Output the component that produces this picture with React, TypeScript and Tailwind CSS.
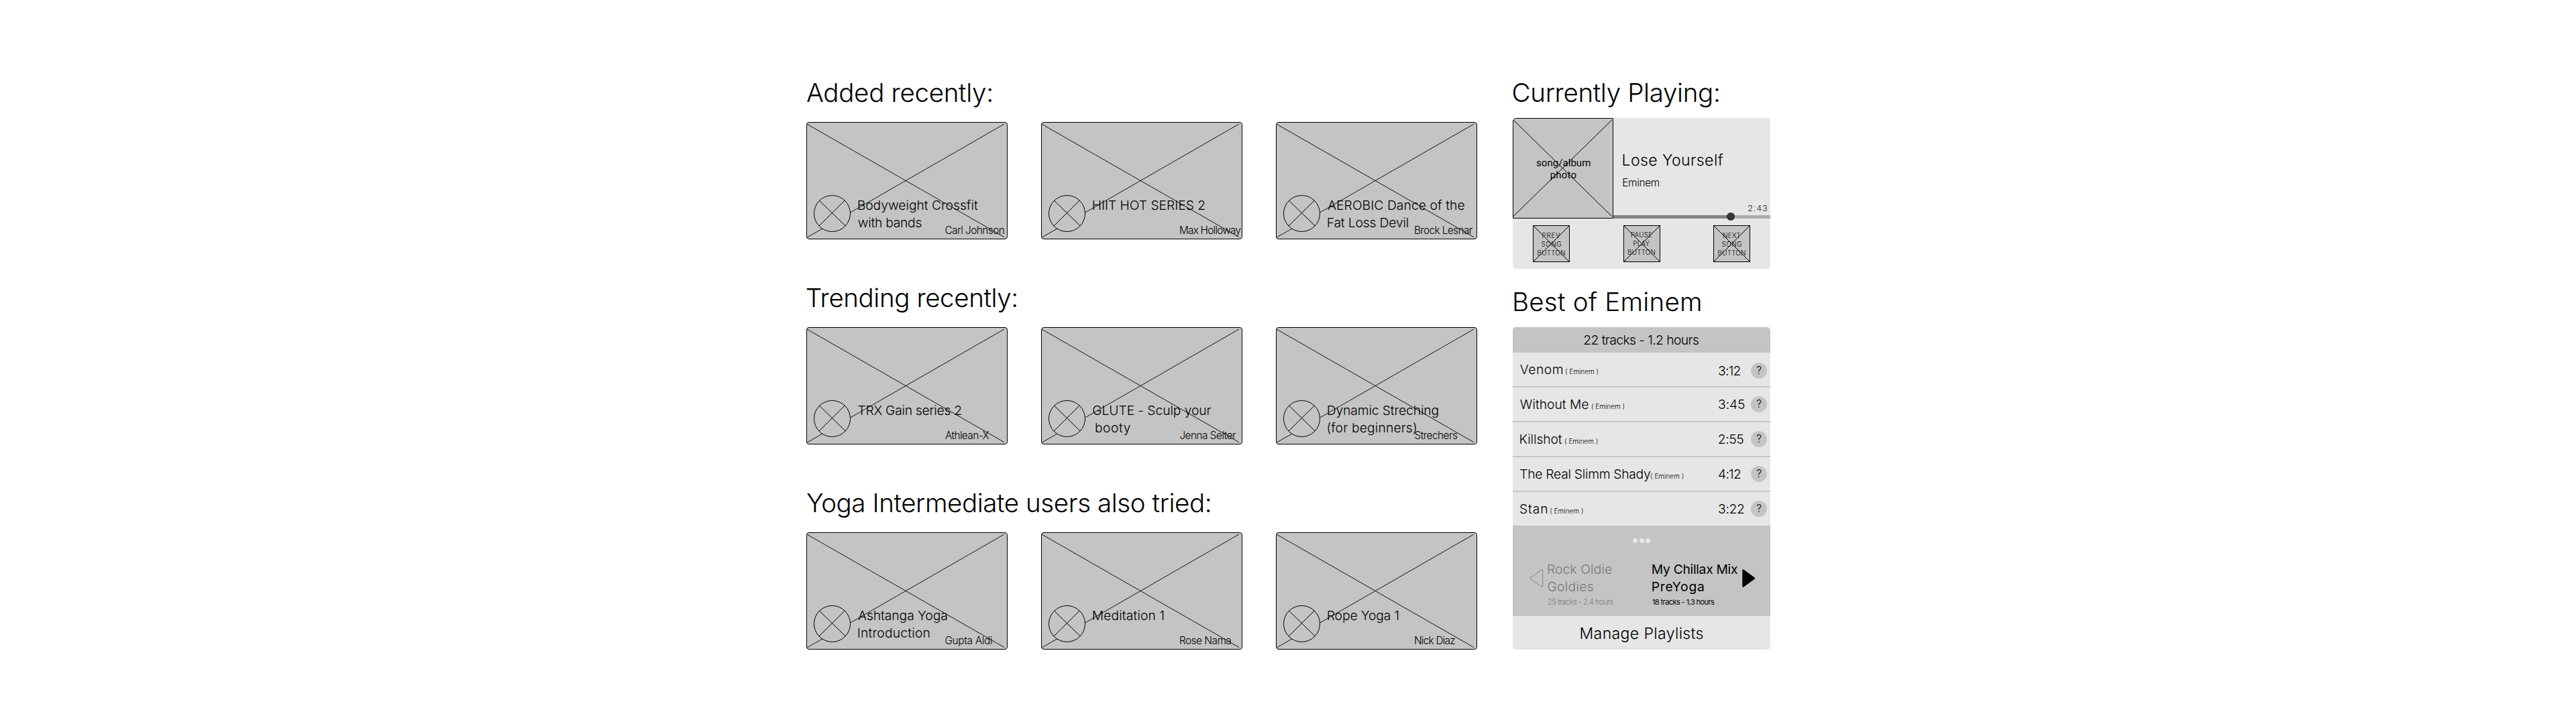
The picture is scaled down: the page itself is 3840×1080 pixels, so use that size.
import { useLayoutEffect, useRef, useState } from 'react';

type TextProps = { children: string; w: number; className: string };

/** One line of text whose letter spacing is tuned so that its ink spans `w` pixels. */
function Line({ children, w, className }: TextProps) {
  const ref = useRef<HTMLDivElement>(null);
  const [fit, setFit] = useState({ letterSpacing: 0, textIndent: 0 });
  useLayoutEffect(() => {
    const el = ref.current;
    const ctx = document.createElement('canvas').getContext('2d');
    if (!el || !ctx) return;
    const cs = getComputedStyle(el);
    // Measure at ten times the size, since ink bounds come back in whole pixels.
    ctx.font = `${cs.fontWeight} ${parseFloat(cs.fontSize) * 10}px ${cs.fontFamily}`;
    const m = ctx.measureText(children);
    const ink = (m.actualBoundingBoxLeft + m.actualBoundingBoxRight) / 10;
    setFit({
      letterSpacing: children.length > 1 ? (w - ink) / (children.length - 1) : 0,
      textIndent: m.actualBoundingBoxLeft / 10,
    });
  }, [children, w]);
  return (
    <div ref={ref} style={{ ...fit, width: w }} className={`whitespace-pre ${className}`}>
      {children}
    </div>
  );
}

type Entry = [text: string, width: number];
type Card = { title: Entry[]; author: Entry; indent?: boolean };
type Section = { heading: Entry; cards: Card[] };

const sections: Section[] = [
  {
    heading: ['Added recently:', 275.5],
    cards: [
      { title: [['Bodyweight Crossfit', 178], ['with bands', 94]], author: ['Carl Johnson', 87.3] },
      { title: [['HIIT HOT SERIES 2', 166.3]], author: ['Max Holloway', 90.3] },
      { title: [['AEROBIC Dance of the', 203.3], ['Fat Loss Devil', 119.3]], author: ['Brock Lesnar', 85.7] },
    ],
  },
  {
    heading: ['Trending recently:', 312.5],
    cards: [
      { title: [['TRX Gain series 2', 153.3]], author: ['Athlean-X', 65] },
      { title: [['GLUTE - Sculp your', 175.7], ['booty', 51.3]], author: ['Jenna Selter', 83], indent: true },
      { title: [['Dynamic Streching', 164.3], ['(for beginners)', 131.3]], author: ['Strechers', 63] },
    ],
  },
  {
    heading: ['Yoga Intermediate users also tried:', 601],
    cards: [
      { title: [['Ashtanga Yoga', 131.8], ['Introduction', 106]], author: ['Gupta Aldi', 69.4] },
      { title: [['Meditation 1', 105]], author: ['Rose Nama', 75.3] },
      { title: [['Rope Yoga 1', 105]], author: ['Nick Diaz', 59.3] },
    ],
  },
];

function VideoCard({ title, author, indent }: Card) {
  return (
    <article className="relative h-[175px] w-[300px] rounded-[4px] border border-black bg-[#c4c4c4]">
      <svg className="absolute -left-px -top-px" width="300" height="175" fill="none" stroke="#000">
        <path d="M1.3 3.3 295 171.7M295 3 1.3 172" strokeWidth="0.9" />
        <circle cx="38.5" cy="136.5" r="27" fill="#c4c4c4" />
        <path d="M19.3 117 58.3 155M57.3 117 19 155" />
      </svg>
      <div className="relative ml-[76.5px] mt-[110px]">
        {title.map(([t, w], i) => (
          <div key={t} className={indent && i === 1 ? 'pl-[4px]' : ''}>
            <Line w={w} className="text-[19.3px] leading-[26px]">{t}</Line>
          </div>
        ))}
      </div>
      <div className="absolute left-[206.3px] top-[150px]">
        <Line w={author[1]} className="text-[15.4px] leading-[21px]">{author[0]}</Line>
      </div>
    </article>
  );
}

type ControlProps = { lines: Entry[]; className?: string };

function ControlButton({ lines, className = '' }: ControlProps) {
  return (
    <button className="relative flex h-[55px] w-[55px] flex-col items-center border border-black bg-[#c4c4c4]">
      <svg className="absolute -left-px -top-px" width="55" height="55" stroke="#000">
        <path d="M1 1 54 54M54 1 1 54" />
      </svg>
      <div className={`flex flex-col items-center ${className}`}>
        {lines.map(([t, w]) => (
          <Line key={t} w={w} className="text-left text-[9.8px] leading-[13px]">{t}</Line>
        ))}
      </div>
    </button>
  );
}

function Player() {
  return (
    <section className="h-[225px] w-[384px] overflow-hidden rounded-[5px] bg-[#e6e6e6]">
      <div className="flex h-[150px]">
        <div className="relative h-[150px] w-[150px] rounded-tl-[5px] border border-black bg-[#c4c4c4]">
          <svg className="absolute -left-px -top-px" width="150" height="150" stroke="#000">
            <path d="M1 3 147.7 146.7M147.7 3 1 146.7" />
          </svg>
          <div className="mt-[57px] flex flex-col items-center pl-[1px] font-['Roboto',sans-serif] font-normal">
            <Line w={79.7} className="text-[15px] leading-[18px]">song/album</Line>
            <Line w={37.7} className="text-[15px] leading-[18px]">photo</Line>
          </div>
        </div>
        <div className="flex w-[234px] flex-col">
          <div className="pl-[14.7px] pt-[47px]">
            <Line w={148.7} className="text-[23.1px] leading-[32px]">Lose Yourself</Line>
            <Line w={53.3} className="mt-[7px] text-[15.4px] leading-[21px]">Eminem</Line>
          </div>
          <div className="mt-auto flex justify-end pr-[5.3px]">
            <Line w={27.7} className="font-['Roboto',sans-serif] text-[12.5px] leading-[14px]">2:43</Line>
          </div>
          <div className="relative mt-[3px] flex h-[5px] bg-[#adadad]">
            <div className="w-[175px] bg-[#828282]" />
            <div className="absolute left-[169px] top-[-4px] h-[12px] w-[12px] rounded-full bg-[#333]" />
          </div>
        </div>
      </div>
      <div className="flex justify-between pl-[30px] pr-[30px] pt-[10px]">
        <ControlButton lines={[['PREV', 26], ['SONG', 28.7], ['BUTTON', 40]]} className="mt-[8px]" />
        <ControlButton lines={[['PAUSE', 30.7], ['PLAY', 23.7], ['BUTTON', 40]]} className="mt-[7px]" />
        <ControlButton lines={[['NEXT', 25.3], ['SONG', 28.7], ['BUTTON', 40]]} className="mt-[8px]" />
      </div>
    </section>
  );
}

const tracks: { name: Entry; gap: number; time: Entry; first?: boolean }[] = [
  { name: ['Venom', 62.7], gap: 5, time: ['3:12', 31.7], first: true },
  { name: ['Without Me', 101.3], gap: 5.3, time: ['3:45', 38] },
  { name: ['Killshot', 62], gap: 4.8, time: ['2:55', 36.3] },
  { name: ['The Real Slimm Shady', 194], gap: 0.8, time: ['4:12', 32] },
  { name: ['Stan', 39.7], gap: 5.3, time: ['3:22', 37] },
];

function Playlist() {
  return (
    <section className="w-[384px] overflow-hidden rounded-[5px] bg-[#e6e6e6]">
      <div className="flex h-[38px] justify-center bg-[#c4c4c4] pt-[6px]">
        <Line w={170.3} className="text-[19.3px] leading-[26px]">22 tracks - 1.2 hours</Line>
      </div>
      <div className="divide-y-2 divide-[#c4c4c4]">
        {tracks.map(({ name, gap, time, first }) => (
          <div key={name[0]} className="box-content flex h-[50px] pl-[11.3px]">
            <div className="flex w-[296px] items-baseline pt-[12px]">
              <Line w={name[1]} className="text-[19.3px] leading-[26px]">{name[0]}</Line>
              <div style={{ paddingLeft: gap }}>
                <Line w={48} className="text-[10px] leading-[13px]">( Eminem )</Line>
              </div>
            </div>
            <div className={`w-[47.7px] ${first ? 'pt-[14px]' : 'pt-[12px]'}`}>
              <Line w={time[1]} className="text-[19.3px] leading-[26px]">{time[0]}</Line>
            </div>
            <div
              className={`flex h-[24px] w-[24px] justify-center rounded-full bg-[#c4c4c4] text-[15.4px] leading-[23px] ${first ? 'mt-[15px]' : 'mt-[13px]'}`}
            >
              ?
            </div>
          </div>
        ))}
      </div>
      <div className="h-[135px] bg-[#c4c4c4] pt-[18.5px]">
        <div className="flex justify-center gap-[2.7px]">
          <span className="h-[7px] w-[7px] rounded-full bg-[#e6e6e6]" />
          <span className="h-[7px] w-[7px] rounded-full bg-[#e6e6e6]" />
          <span className="h-[7px] w-[7px] rounded-full bg-[#e6e6e6]" />
        </div>
        <div className="flex pl-[26px] pt-[26.5px]">
          <svg className="mt-[13px] shrink-0" width="20" height="28" fill="none" stroke="#828282">
            <path d="M17.2 .8 1 12.4Q-.3 13.5 1 14.8L17.2 26.4Q18.7 27.2 18.7 25.6V1.8Q18.7 .2 17.2 .8Z" />
          </svg>
          <div className="ml-[6.7px] w-[155.7px] text-[#787878]">
            <Line w={94.7} className="text-[19.3px] leading-[26px]">Rock Oldie</Line>
            <Line w={67} className="text-[19.3px] leading-[26px]">Goldies</Line>
            <Line w={97} className="mt-[2px] text-[11px] leading-[16px]">25 tracks - 2.4 hours</Line>
          </div>
          <div className="w-[133.3px] font-normal">
            <Line w={126.7} className="text-[19.3px] leading-[26px]">My Chillax Mix</Line>
            <Line w={76} className="text-[19.3px] leading-[26px]">PreYoga</Line>
            <Line w={92} className="mt-[2px] text-[11px] leading-[16px]">18 tracks - 1.3 hours</Line>
          </div>
          <svg className="mt-[13px] shrink-0" width="20" height="28">
            <path d="M2.1 .5 18.2 12.3Q20 13.6 18.2 15L2.1 26.7Q.3 27.6 .3 25.7V1.5Q.3 -.3 2.1 .5Z" />
          </svg>
        </div>
      </div>
      <div className="flex h-[50px] justify-center pl-[1px] pt-[10px]">
        <Line w={181.7} className="text-[23.1px] leading-[32px]">Manage Playlists</Line>
      </div>
    </section>
  );
}

export default function App() {
  return (
    <main className="flex h-[1080px] w-[3840px] bg-white pl-[1202px] pt-[113px] font-['Inter',sans-serif] font-[350] text-black">
      <div className="flex w-[1000px] flex-col">
        {sections.map(({ heading, cards }) => (
          <section key={heading[0]} className="h-[306px]">
            <div className="pl-[0.5px]">
              <Line w={heading[1]} className="text-[38.5px] leading-[50px]">{heading[0]}</Line>
            </div>
            <div className="mt-[19px] flex gap-[50px]">
              {cards.map((card) => (
                <VideoCard key={card.author[0]} {...card} />
              ))}
            </div>
          </section>
        ))}
      </div>
      <aside className="ml-[53px] w-[384px]">
        <div className="h-[63px] pl-[1px]">
          <Line w={305.7} className="text-[38.5px] leading-[50px]">Currently Playing:</Line>
        </div>
        <Player />
        <div className="h-[87px] pl-[2.7px] pt-[24px]">
          <Line w={277} className="text-[38.5px] leading-[50px]">Best of Eminem</Line>
        </div>
        <Playlist />
      </aside>
    </main>
  );
}
